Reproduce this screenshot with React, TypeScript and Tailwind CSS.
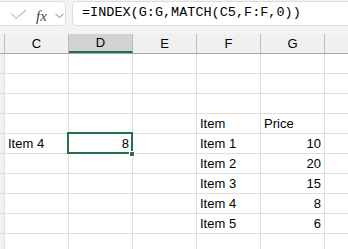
import React from "react";

const cols = ["C", "D", "E", "F", "G"];

type Cell = { t: string; right?: boolean };
const rows: Record<number, Record<string, Cell>> = {
  4: { F: { t: "Item" }, G: { t: "Price" } },
  5: { C: { t: "Item 4" }, D: { t: "8", right: true }, F: { t: "Item 1" }, G: { t: "10", right: true } },
  6: { F: { t: "Item 2" }, G: { t: "20", right: true } },
  7: { F: { t: "Item 3" }, G: { t: "15", right: true } },
  8: { F: { t: "Item 4" }, G: { t: "8", right: true } },
  9: { F: { t: "Item 5" }, G: { t: "6", right: true } },
};

export default function App() {
  return (
    <div className="relative w-[348px] h-[249px] overflow-hidden bg-white" style={{ fontFamily: '"Liberation Sans", Arial, sans-serif' }}>
      {/* formula bar */}
      <div className="flex h-[34px] bg-[#f3f3f3] pt-[1px] gap-[6px]">
        <div className="ml-[-6px] w-[72px] h-[25px] bg-white border border-[#dcdcdc] rounded-[5px] relative">
          <svg className="absolute left-[15px] top-[7px]" width="18" height="12" viewBox="0 0 18 12">
            <path d="M1 4 L6 9.5 L16 1" fill="none" stroke="#bdbdbd" strokeWidth="1.1" />
          </svg>
          <span className="absolute left-[41px] top-[3px] text-[15px] italic text-[#444]" style={{ fontFamily: '"Liberation Serif", serif' }}>fx</span>
          <svg className="absolute left-[60px] top-[11px]" width="9" height="6" viewBox="0 0 9 6">
            <path d="M0.5 0.8 L4.5 4.8 L8.5 0.8" fill="none" stroke="#777" strokeWidth="1" />
          </svg>
        </div>
        <div className="flex-1 h-[25px] bg-white border border-[#dcdcdc] rounded-l-[5px] border-r-0 flex items-center pl-[9px]">
          <span className="text-[13.5px] text-black" style={{ fontFamily: '"Liberation Mono", monospace' }}>=INDEX(G:G,MATCH(C5,F:F,0))</span>
        </div>
      </div>
      {/* header row */}
      <div className="flex h-[20px] bg-[#f0f0f0] border-b border-[#a6a6a6]">
        <div className="w-[5px] shrink-0 border-r border-[#bdbdbd]" />
        {cols.map((c) => (
          <div
            key={c}
            className={
              c === "D"
                ? "w-[64px] shrink-0 border-r border-[#bdbdbd] bg-[#d2d2d2] border-b-2 border-b-[#1e7145] flex items-center justify-center text-[13px] text-black"
                : "w-[64px] shrink-0 border-r border-[#bdbdbd] flex items-center justify-center text-[13px] text-black"
            }
          >
            {c}
          </div>
        ))}
        <div className="flex-1" />
      </div>
      {/* grid */}
      {Array.from({ length: 10 }, (_, i) => i + 1).map((r) => (
        <div key={r} className="flex h-[20px] border-b border-[#dedede]">
          <div className="w-[5px] shrink-0 border-r border-[#dedede] bg-[#f0f0f0]" />
          {cols.map((c) => {
            const cell = rows[r]?.[c];
            return (
              <div
                key={c}
                className={
                  cell?.right
                    ? "w-[64px] shrink-0 border-r border-[#dedede] flex items-center justify-end pr-[3px] text-[13px] text-black"
                    : "w-[64px] shrink-0 border-r border-[#dedede] flex items-center pl-[3px] text-[13px] text-black"
                }
              >
                {cell?.t}
              </div>
            );
          })}
          <div className="flex-1" />
        </div>
      ))}
      {/* selection */}
      <div className="absolute left-[67px] top-[132px] w-[66px] h-[22px] border-2 border-[#217346] pointer-events-none" />
      <div className="absolute left-[129px] top-[151px] w-[6px] h-[6px] bg-[#217346] border border-white" />
    </div>
  );
}
